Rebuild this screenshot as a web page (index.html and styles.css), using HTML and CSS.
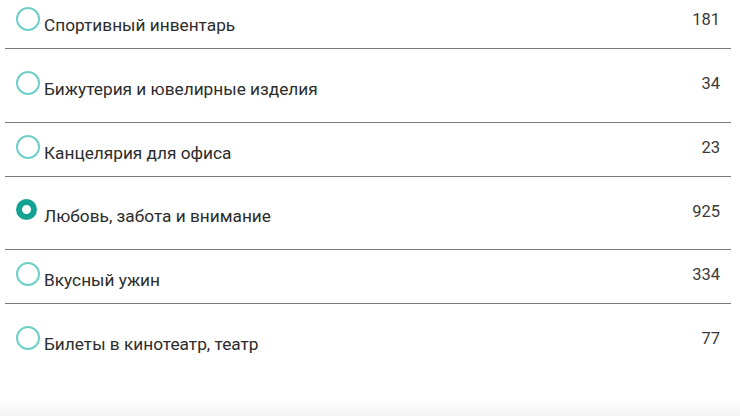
FILE: index.html
```html
<!DOCTYPE html>
<html lang="ru">
<head>
<meta charset="utf-8">
<title>Категории</title>
<link rel="stylesheet" href="styles.css">
</head>
<body>
<ul class="list">
  <li class="row short">
    <div class="label"><span class="radio"></span>Спортивный инвентарь</div>
    <div class="count">181</div>
  </li>
  <li class="row tall">
    <div class="label"><span class="radio"></span>Бижутерия и ювелирные изделия</div>
    <div class="count">34</div>
  </li>
  <li class="row short">
    <div class="label"><span class="radio"></span>Канцелярия для офиса</div>
    <div class="count">23</div>
  </li>
  <li class="row tall">
    <div class="label"><span class="radio checked"></span>Любовь, забота и внимание</div>
    <div class="count">925</div>
  </li>
  <li class="row short">
    <div class="label"><span class="radio"></span>Вкусный ужин</div>
    <div class="count">334</div>
  </li>
  <li class="row tall last">
    <div class="label"><span class="radio"></span>Билеты в кинотеатр, театр</div>
    <div class="count">77</div>
  </li>
</ul>
</body>
</html>
```

FILE: styles.css
```css
html, body {
  margin: 0;
  padding: 0;
  height: 100%;
}
body {
  background: linear-gradient(to bottom, #ffffff 0, #ffffff 398px, #f4f4f4 416px);
  font-family: Roboto, "Noto Sans", Arial, sans-serif;
  color: #333333;
  overflow: hidden;
}
.list {
  list-style: none;
  margin: -5px 0 0 5px;
  padding: 0;
  width: 726px;
}
.row {
  display: flex;
  justify-content: space-between;
  align-items: flex-start;
  padding: 12px 11px 13px 11px;
  border-bottom: 1px solid #7a7a7a;
}
.row.tall {
  padding-top: 22px;
  padding-bottom: 23px;
}
.row.last {
  border-bottom: none;
}
.label {
  font-size: 17.25px;
  line-height: normal;
  color: #2c2c2c;
}
.radio {
  display: inline-block;
  box-sizing: border-box;
  width: 24px;
  height: 24px;
  border: 2px solid #6fd0c8;
  border-radius: 50%;
  margin-right: 4px;
  vertical-align: baseline;
}
.radio.checked {
  width: 21px;
  height: 21px;
  border: 6px solid #14a393;
  margin-right: 7px;
  margin-bottom: 2px;
}
.count {
  font-size: 16.5px;
  line-height: normal;
  margin-top: 3px;
  color: #3a3a3a;
}
```
